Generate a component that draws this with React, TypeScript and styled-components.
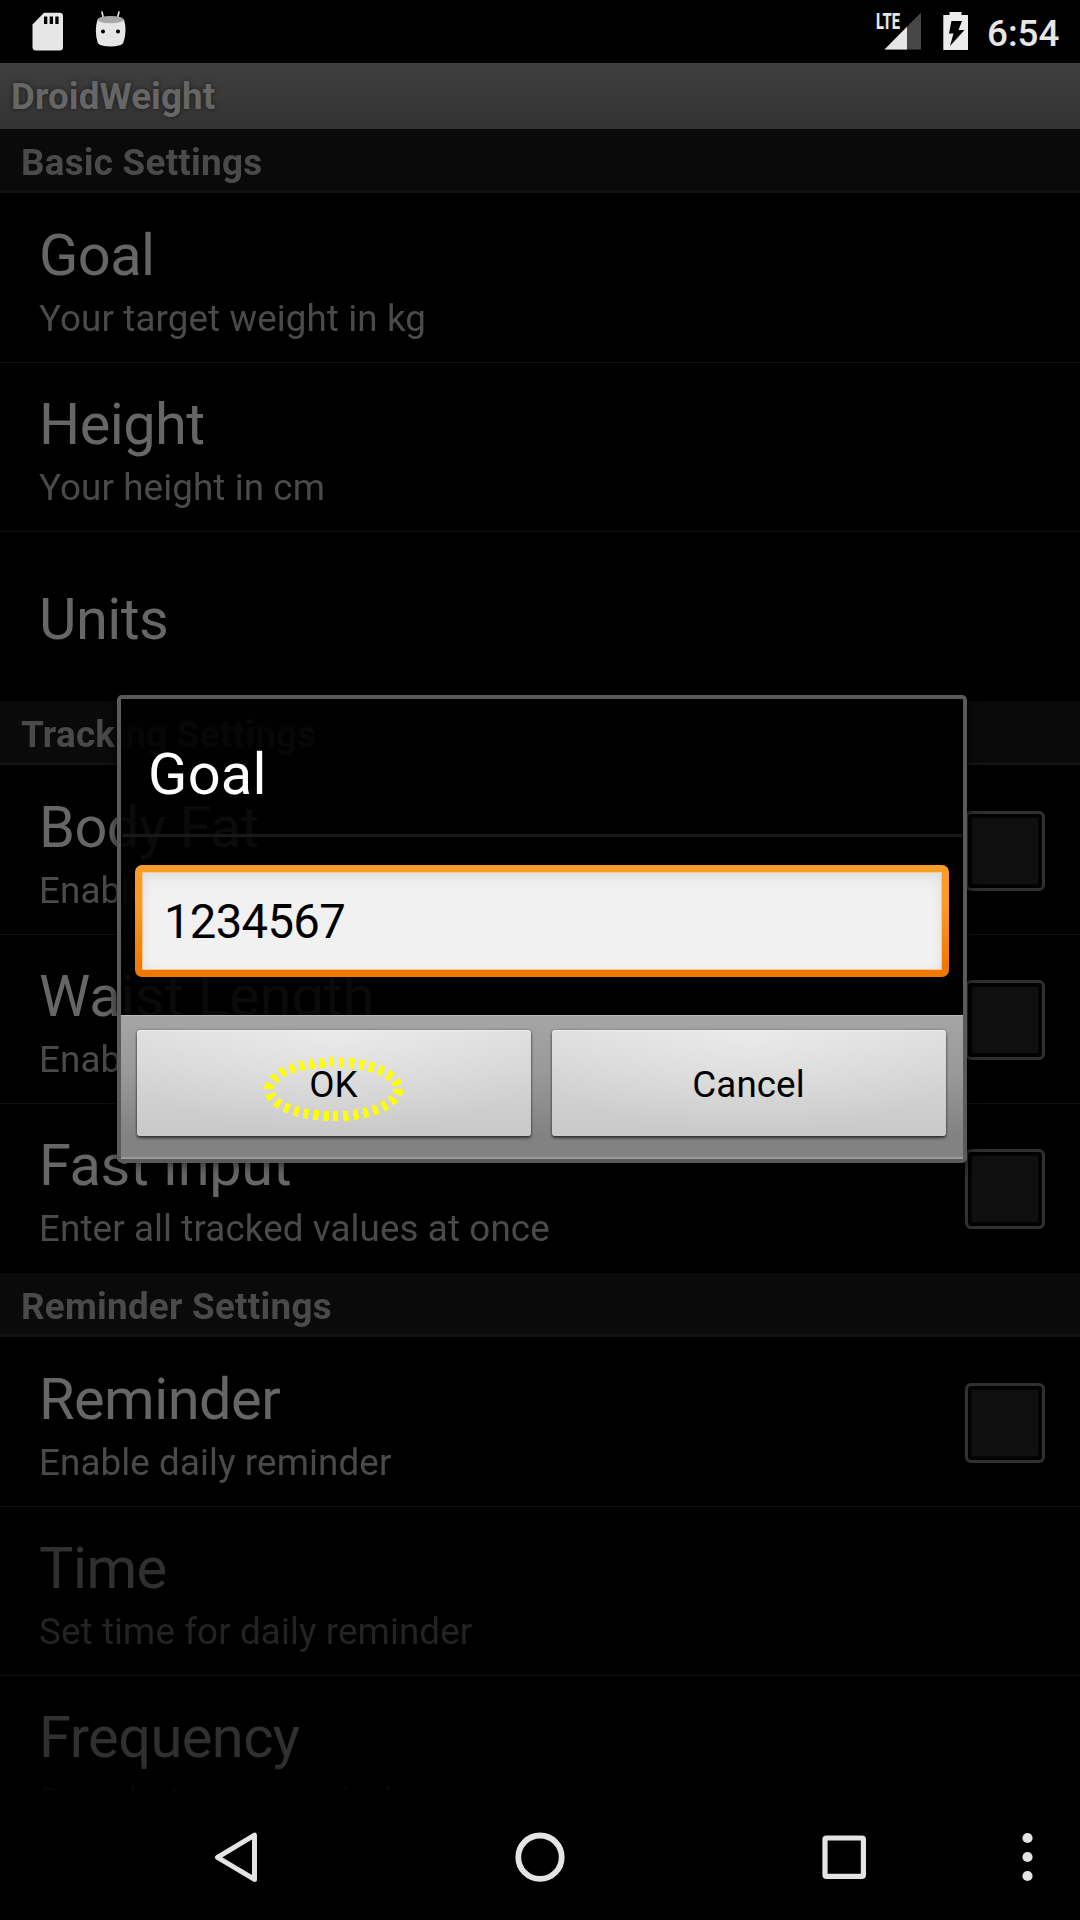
import React from 'react';
import styled, { createGlobalStyle } from 'styled-components';

const GlobalStyle = createGlobalStyle`
  html, body { margin: 0; padding: 0; background: #000; }
  * { box-sizing: border-box; }
`;

const Screen = styled.div`
  position: relative;
  display: flex;
  flex-direction: column;
  width: 1080px;
  height: 1920px;
  overflow: hidden;
  background: #000;
  font-family: Roboto, "Liberation Sans", sans-serif;
  white-space: nowrap;
`;

const StatusBar = styled.header`
  display: flex;
  justify-content: space-between;
  flex: 0 0 63px;
  height: 63px;
  padding: 0 20px 0 32px;
  color: #e6e6e6;
`;

const StatusGroup = styled.div<{ $gap: number }>`
  display: flex;
  gap: ${(p) => p.$gap}px;
`;

const Clock = styled.time`
  width: 73px;
  margin-left: -3px;
  padding-top: 12px;
  font-size: 36.75px;
  font-weight: 500;
  line-height: 43px;
`;

const Icon = styled.svg`
  display: block;
  flex: none;
`;

const Main = styled.main`
  flex: 0 0 1731px;
  display: flex;
  flex-direction: column;
  min-height: 0;
`;

const AppTitle = styled.h1`
  flex: 0 0 66px;
  margin: 0;
  padding: 12px 0 0 11px;
  background: linear-gradient(#3f3f3f, #333);
  color: #666;
  font-size: 36.75px;
  font-weight: 700;
  line-height: 43px;
  letter-spacing: 0.1px;
  text-shadow: 0 0 5px rgba(0, 0, 0, 0.55);
`;

const List = styled.div`
  flex: 1;
  min-height: 0;
  overflow: hidden;
  mask-image: linear-gradient(#000 calc(100% - 31px), transparent);
`;

const SectionHeader = styled.h2`
  height: 65px;
  margin: 0;
  padding: 12px 0 0 21px;
  border-bottom: 1px solid #000;
  background: linear-gradient(#0a0a0a 61px, #171717 63px, #111 64px);
  color: #4a4a4a;
  font-size: 36.75px;
  font-weight: 700;
  line-height: 43px;
  letter-spacing: 0.27px;
`;

const Row = styled.div<{ $last?: boolean }>`
  display: flex;
  align-items: center;
  justify-content: space-between;
  height: 169px;
  padding: 0 35px 0 39px;
  border-bottom: 1px solid ${(p) => (p.$last ? '#000' : '#111')};
`;

const RowText = styled.div`
  display: flex;
  flex-direction: column;
  padding-top: 4px;
`;

const RowTitle = styled.div<{ $dim?: boolean; $tracking?: number }>`
  color: ${(p) => (p.$dim ? '#303030' : '#666')};
  font-size: 57.75px;
  line-height: 77px;
  letter-spacing: ${(p) => p.$tracking ?? -0.55}px;

  &:only-child {
    padding-top: 2px;
  }
`;

const Summary = styled.div<{ $dim?: boolean }>`
  color: ${(p) => (p.$dim ? '#232323' : '#4a4a4a')};
  font-size: 36.75px;
  line-height: 49px;
  letter-spacing: 0.11px;
`;

const Checkbox = styled.div`
  width: 80px;
  height: 80px;
  margin-top: 2px;
  padding: 4px;
  border: 3px solid #303030;
  border-radius: 6px;
  background: #020202;

  &::after {
    content: '';
    display: block;
    height: 66px;
    background: #101010;
    box-shadow: 0 0 2px #101010;
  }
`;

const NavBar = styled.nav`
  flex: 0 0 126px;
  display: flex;
  background: #000;
`;

const Overlay = styled.div`
  position: absolute;
  inset: 0;
  padding: 695px 113px 0 117px;
`;

const Dialog = styled.section`
  height: 468px;
  border: 4px solid #5a5a5a;
  border-radius: 5px;
  box-shadow: 0 0 14px rgba(0, 0, 0, 0.75), inset 0 0 0 1px rgba(20, 20, 20, 0.5);
  display: flex;
  flex-direction: column;
`;

const DialogBody = styled.div`
  flex: 0 0 316px;
  background: rgba(0, 0, 0, 0.9);
`;

const DialogTitle = styled.h3`
  height: 138px;
  margin: 0 1px;
  padding: 41px 0 0 26px;
  border-bottom: 3px solid #191919;
  color: #fff;
  font-size: 57.75px;
  font-weight: 400;
  line-height: 68px;
  letter-spacing: 0.3px;
`;

const Field = styled.div`
  height: 112px;
  margin: 28px 14px 0;
  padding: 7px;
  border-radius: 7px;
  background: linear-gradient(#fb9c26 0, #fb9a26 35%, #f07800 90%);
`;

const FieldValue = styled.div`
  height: 98px;
  padding: 21px 0 0 21px;
  border: 1px solid #f8c893;
  background: #f1f1f1;
  box-shadow: inset 0 7px 14px rgba(0, 0, 0, 0.055), inset 0 0 12px rgba(0, 0, 0, 0.025);
  color: #000;
  font-size: 47.25px;
  line-height: 56px;
  letter-spacing: -0.7px;
`;

const ButtonPanel = styled.footer`
  flex: 1;
  display: flex;
  gap: 21px;
  padding: 14px 17px 0 16px;
  border-top: 1px solid #b9b9b9;
  border-bottom: 2px solid #9b9b9b;
  background: linear-gradient(#a5a5a5, #999 40%, #828282 85%);
`;

const DialogButton = styled.button`
  position: relative;
  flex: 1;
  height: 106px;
  padding: 2px 1px 0 0;
  border: 0;
  border-radius: 3px;
  background: radial-gradient(ellipse 60% 100% at 50% 0, rgba(255, 255, 255, 0.38), rgba(255, 255, 255, 0)),
    linear-gradient(#dedede, #c9c9c9 95%);
  box-shadow: 0 2px 3px rgba(0, 0, 0, 0.6), 0 0 2px rgba(0, 0, 0, 0.4), inset 0 1px 0 #eee;
  color: #000;
  font-family: inherit;
  font-size: 36.75px;
  line-height: 43px;
  letter-spacing: 0.1px;
`;

const Highlight = styled.svg`
  position: absolute;
  left: 126px;
  top: 26px;
`;

type Item = { title: string; summary?: string; check?: boolean; dim?: boolean; tracking?: number };
type Section = { name: string; items: Item[] };

const sections: Section[] = [
  {
    name: 'Basic Settings',
    items: [
      { title: 'Goal', summary: 'Your target weight in kg' },
      { title: 'Height', summary: 'Your height in cm' },
      { title: 'Units' },
    ],
  },
  {
    name: 'Tracking Settings',
    items: [
      { title: 'Body Fat', summary: 'Enable tracking', check: true },
      { title: 'Waist Length', summary: 'Enable tracking', check: true, tracking: 0 },
      { title: 'Fast Input', summary: 'Enter all tracked values at once', check: true, tracking: -0.4 },
    ],
  },
  {
    name: 'Reminder Settings',
    items: [
      { title: 'Reminder', summary: 'Enable daily reminder', check: true },
      { title: 'Time', summary: 'Set time for daily reminder', dim: true },
      { title: 'Frequency', summary: 'Days between reminders', dim: true },
    ],
  },
];

const SdCardIcon = () => (
  <Icon width="32" height="63" viewBox="0 0 32 63">
    <path fill="#e6e6e6" d="M12 12.7H27.5Q31 12.7 31 16V47Q31 50.5 27.5 50.5H4Q.5 50.5 .5 47V24.5Z" />
    <path fill="#000" d="M12 16.5h3.3V24H12zM17.7 16.5H21V24h-3.3zM23.3 16.5h3.3V24h-3.3z" />
  </Icon>
);

const MarshmallowIcon = () => (
  <Icon width="32" height="63" viewBox="0 0 32 63">
    <path stroke="#e6e6e6" strokeWidth="1.6" strokeLinecap="round" d="M7 12l1.5 7M24 12l-1.8 7" />
    <path fill="#e6e6e6" d="M2.5 19.5Q-1 31 2.8 43Q3.5 44.6 6 45.2Q15.5 48 25 45.2Q27.5 44.6 28.2 43Q32.4 31 29 19.5Z" />
    <ellipse cx="15.6" cy="19.6" rx="13" ry="3.7" fill="#a8a8a8" />
    <circle cx="8" cy="31.5" r="2" fill="#000" />
    <circle cx="23" cy="31.5" r="2" fill="#000" />
  </Icon>
);

const SignalIcon = () => (
  <Icon width="46" height="63" viewBox="0 0 46 63">
    <path fill="#474747" d="M45 12.5V49.5H8.5Z" />
    <path fill="#e6e6e6" d="M31 26.7V49.5H8.5Z" />
    <text x="0" y="29" fill="#e6e6e6" fontSize="21.5" fontWeight="800" textLength="24" lengthAdjust="spacingAndGlyphs">
      LTE
    </text>
  </Icon>
);

const BatteryIcon = () => (
  <Icon width="26" height="63" viewBox="0 0 26 63">
    <path fill="#ececec" d="M6.5 12H18.5V15H25V50H.3V15H6.5Z" />
    <path fill="#000" d="M8.5 21H19L15.5 30H21.5L7 46L10.5 33.5H6Z" />
  </Icon>
);

const NavIcons = () => (
  <Icon width="1080" height="126" viewBox="0 0 1080 126" fill="none" stroke="#e4e4e4">
    <path strokeWidth="5" strokeLinejoin="round" d="M217.5 63.3L254.5 41.2V85.4Z" />
    <circle cx="540" cy="63.2" r="21.7" strokeWidth="5.8" />
    <rect x="825" y="44" width="38.4" height="38.4" rx="1.5" strokeWidth="5.2" />
    <g fill="#e4e4e4" stroke="none">
      <circle cx="1027.5" cy="44" r="5.1" />
      <circle cx="1027.5" cy="63" r="5.1" />
      <circle cx="1027.5" cy="82" r="5.1" />
    </g>
  </Icon>
);

export default function App() {
  return (
    <>
      <GlobalStyle />
      <Screen>
        <StatusBar>
          <StatusGroup $gap={31}>
            <SdCardIcon />
            <MarshmallowIcon />
          </StatusGroup>
          <StatusGroup $gap={21}>
            <SignalIcon />
            <BatteryIcon />
            <Clock>6:54</Clock>
          </StatusGroup>
        </StatusBar>
        <Main>
          <AppTitle>DroidWeight</AppTitle>
          <List>
            {sections.map((section) => (
              <section key={section.name}>
                <SectionHeader>{section.name}</SectionHeader>
                {section.items.map((item, i) => (
                  <Row key={item.title} $last={i === section.items.length - 1}>
                    <RowText>
                      <RowTitle $dim={item.dim} $tracking={item.tracking}>
                        {item.title}
                      </RowTitle>
                      {item.summary && <Summary $dim={item.dim}>{item.summary}</Summary>}
                    </RowText>
                    {item.check && <Checkbox />}
                  </Row>
                ))}
              </section>
            ))}
          </List>
        </Main>
        <NavBar>
          <NavIcons />
        </NavBar>
        <Overlay>
          <Dialog>
            <DialogBody>
              <DialogTitle>Goal</DialogTitle>
              <Field>
                <FieldValue>1234567</FieldValue>
              </Field>
            </DialogBody>
            <ButtonPanel>
              <DialogButton>
                OK
                <Highlight width="142" height="68" viewBox="0 0 142 68" shapeRendering="crispEdges">
                  <ellipse cx="70.7" cy="33.3" rx="64.5" ry="27" fill="none" stroke="#ff0" strokeWidth="10" strokeDasharray="5 5" />
                </Highlight>
              </DialogButton>
              <DialogButton>Cancel</DialogButton>
            </ButtonPanel>
          </Dialog>
        </Overlay>
      </Screen>
    </>
  );
}
